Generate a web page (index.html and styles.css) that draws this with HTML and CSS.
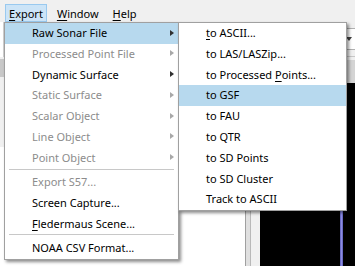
FILE: index.html
```html
<!DOCTYPE html>
<html lang="en">

<head>
    <meta charset="UTF-8">
    <meta name="viewport" content="width=device-width, initial-scale=1.0">
    <link rel="stylesheet" href="styles.css">
    <title>Export menu</title>
</head>

<body>
    <div class="window">
        <div class="menubar">
            <span class="bar-item open"><u>E</u>xport</span>
            <span class="bar-item"><u>W</u>indow</span>
            <span class="bar-item"><u>H</u>elp</span>
        </div>

        <div class="workspace">
            <div class="left-pane">
                <div class="strip">
                    <div class="strip-top"></div>
                    <div class="strip-block"></div>
                    <div class="strip-panel"></div>
                </div>
            </div>
            <div class="splitter"></div>
            <div class="right-pane">
                <div class="toolbar">
                    <div class="combo"><span class="combo-arrow"></span></div>
                </div>
                <div class="ruler"></div>
                <div class="viewport"><span class="axis"></span></div>
            </div>
        </div>

        <!-- Export menu -->
        <div class="menu main-menu">
            <div class="item active">Raw Sonar File<span class="arrow"></span></div>
            <div class="item disabled">Processed Point File<span class="arrow"></span></div>
            <div class="item">Dynamic Surface<span class="arrow"></span></div>
            <div class="item disabled">Static Surface<span class="arrow"></span></div>
            <div class="item disabled">Scalar Object<span class="arrow"></span></div>
            <div class="item disabled">Line Object<span class="arrow"></span></div>
            <div class="item disabled">Point Object<span class="arrow"></span></div>
            <div class="sep"></div>
            <div class="item disabled">Export S57...</div>
            <div class="item">Screen Capture...</div>
            <div class="item"><u>F</u>ledermaus Scene...</div>
            <div class="sep"></div>
            <div class="item">NOAA CSV Format...</div>
        </div>

        <!-- Raw Sonar File submenu -->
        <div class="menu sub-menu">
            <div class="item"><u>t</u>o ASCII...</div>
            <div class="item">to LAS/LASZip...</div>
            <div class="item">to Processed <u>P</u>oints...</div>
            <div class="item active">to GSF</div>
            <div class="item">to FAU</div>
            <div class="item">to QTR</div>
            <div class="item">to SD Points</div>
            <div class="item">to SD Cluster</div>
            <div class="item">Track to ASCII</div>
        </div>
    </div>
</body>

</html>
```

FILE: styles.css
```css
* {
    margin: 0;
    padding: 0;
    box-sizing: border-box;
}

body {
    font-family: "Noto Sans", "Open Sans", sans-serif;
    font-size: 11px;
    color: #000;
    background: #fff;
}

u {
    text-decoration: underline;
    text-underline-offset: 2px;
}

.window {
    width: 355px;
    height: 266px;
    position: relative;
    overflow: hidden;
    display: flex;
    flex-direction: column;
}

/* menu bar */

.menubar {
    height: 22px;
    display: flex;
    align-items: flex-end;
    padding-left: 5px;
    gap: 6px;
    background: #f0f0f0;
}

.bar-item {
    height: 18px;
    line-height: 17px;
    padding: 0 3px;
    border: 1px solid transparent;
}

.bar-item.open {
    background: #cce4f7;
    border-color: #99c9ef;
}

/* background panes */

.workspace {
    flex: 1;
    display: flex;
}

.left-pane {
    width: 245px;
    background: #fff;
}

.strip {
    width: 4px;
    display: flex;
    flex-direction: column;
}

.strip-top {
    height: 35px;
    border-left: 2px solid #fff;
    border-right: 1px solid #d0d0d0;
}

.strip-block {
    height: 25px;
    background: #c8c8c8;
    border-top: 2px solid #f0f0f0;
    border-bottom: 5px solid #f0f0f0;
}

.strip-panel {
    height: 65px;
    background: #f0f0f0;
}

.splitter {
    width: 15px;
    border-left: 1px solid #a0a0a0;
    background: linear-gradient(to right, #e0e0e0 4px, #b8b8b8 4px, #b8b8b8 5px, #f0f0f0 5px);
}

.right-pane {
    flex: 1;
    display: flex;
    flex-direction: column;
    background: #f0f0f0;
}

.toolbar {
    height: 35px;
    display: flex;
    justify-content: flex-end;
    padding-top: 6px;
    border-bottom: 1px solid #c8c8c8;
}

.combo {
    width: 60px;
    height: 22px;
    background: #fff;
    border: 1px solid #b0b0b0;
    border-right: none;
    position: relative;
}

.combo-arrow {
    position: absolute;
    right: 3px;
    top: 8px;
    border-top: 4px solid #404040;
    border-left: 3.5px solid transparent;
    border-right: 3.5px solid transparent;
}

.ruler {
    height: 26px;
    background: #d4d4d4;
    border-top: 3px solid #f0f0f0;
}

.viewport {
    flex: 1;
    background: #000;
    position: relative;
}

.axis {
    position: absolute;
    left: 80px;
    top: 0;
    bottom: 0;
    width: 3px;
    background: linear-gradient(to right, #5a5ab8, #8c8ce0, #5a5ab8);
}

/* popup menus */

.menu {
    position: absolute;
    top: 22px;
    background: #fff;
    border: 1px solid #a0a0a0;
    box-shadow: 2px 2px 3px rgba(0, 0, 0, 0.45);
}

.main-menu {
    left: 4px;
    width: 175px;
}

.sub-menu {
    left: 178px;
    width: 169px;
}

.item {
    height: 20.8px;
    line-height: 20.8px;
    padding-left: 27px;
    white-space: nowrap;
    position: relative;
}

.item.active {
    background: #b7d9ee;
}

.item.disabled {
    color: #8c8c8c;
}

.arrow {
    position: absolute;
    right: 4px;
    top: 6.5px;
    border-left: 4px solid #303030;
    border-top: 3.5px solid transparent;
    border-bottom: 3.5px solid transparent;
}

.disabled .arrow {
    border-left-color: #a8a8a8;
}

.sep {
    height: 3.5px;
    margin: 0 4px 0 4px;
    border-top: 1px solid #c8c8c8;
}
```
